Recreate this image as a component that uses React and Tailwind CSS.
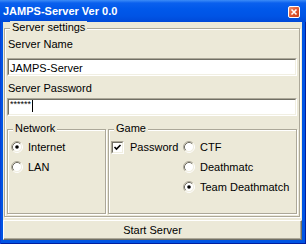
import React from "react";

function Radio({ checked }) {
  return (
    <svg width="12" height="12" viewBox="0 0 12 12" className="shrink-0 block">
      <circle cx="6" cy="6" r="4.5" fill="#fff" />
      <path d="M2.11 9.89 A5.5 5.5 0 0 1 9.89 2.11" fill="none" stroke="#aca899" strokeWidth="1" />
      <path d="M9.89 2.11 A5.5 5.5 0 0 1 2.11 9.89" fill="none" stroke="#ffffff" strokeWidth="1" />
      <path d="M2.82 9.18 A4.5 4.5 0 0 1 9.18 2.82" fill="none" stroke="#716f64" strokeWidth="1" />
      <path d="M9.18 2.82 A4.5 4.5 0 0 1 2.82 9.18" fill="none" stroke="#f1efe2" strokeWidth="1" />
      {checked && <circle cx="6" cy="6" r="1.8" fill="#000" />}
    </svg>
  );
}

function RadioRow({ checked, label }) {
  return (
    <div className="h-[20px] flex items-center">
      <Radio checked={checked} />
      <span className="ml-[5px] whitespace-nowrap">{label}</span>
    </div>
  );
}

function Checkbox({ checked }) {
  return (
    <div className="w-[13px] h-[13px] shrink-0 border border-t-[#aca899] border-l-[#aca899] border-b-white border-r-white">
      <div className="w-full h-full border border-t-[#716f64] border-l-[#716f64] border-b-[#f1efe2] border-r-[#f1efe2] bg-white">
        {checked && (
          <svg width="9" height="9" viewBox="0 0 9 9" className="block">
            <path d="M1.5 4 L3.5 6 L7.5 2" fill="none" stroke="#000" strokeWidth="1.6" />
          </svg>
        )}
      </div>
    </div>
  );
}

function Group({ label, className, legendClass, children }) {
  return (
    <div className={"relative border border-[#aca899] shadow-[inset_1px_1px_0_#fff,1px_1px_0_#fff] " + className}>
      <span className={"absolute left-[5px] px-[2px] bg-[#ece9d8] whitespace-nowrap " + legendClass}>{label}</span>
      {children}
    </div>
  );
}

function TextBox({ children }) {
  return (
    <div className="h-[18px] border border-t-[#aca899] border-l-[#aca899] border-b-white border-r-white">
      <div className="w-full h-full border border-t-[#716f64] border-l-[#716f64] border-b-[#f1efe2] border-r-[#f1efe2] bg-white pl-[1px]">
        {children}
      </div>
    </div>
  );
}

export default function App() {
  return (
    <div className="w-[306px] h-[244px] flex flex-col bg-[#0054e3] shadow-[inset_1px_0_0_#0a3fd6,inset_-1px_0_0_#001ea0,inset_0_-1px_0_#001ea0] font-['Liberation_Sans',Arial,sans-serif] text-[11px] leading-[13px] text-black overflow-hidden">
      <div className="h-[22px] shrink-0 flex items-start justify-between bg-[linear-gradient(to_bottom,#3c8cf7_0px,#0a60ee_3px,#0058ea_9px,#0054e5_16px,#0049d8_22px)]">
        <span className="pl-[3px] pt-[5px] font-bold text-white whitespace-nowrap">JAMPS-Server Ver 0.0</span>
        <div className="mt-[6px] mr-[6px] w-[12px] h-[12px] rounded-[2px] border border-white bg-[linear-gradient(to_bottom_right,#f0906c,#e0552e_55%,#c8401a)] flex items-center justify-center">
          <svg width="8" height="8" viewBox="0 0 8 8" className="block">
            <path d="M1.5 1.5 L6.5 6.5 M6.5 1.5 L1.5 6.5" stroke="#fff" strokeWidth="1.6" />
          </svg>
        </div>
      </div>
      <div className="flex-1 ml-[3px] mr-[4px] mb-[4px] bg-[#ece9d8] flex flex-col">
        <Group label="Server settings" className="mt-[6px] ml-[1px] mr-[2px] h-[189px] pt-[9px] px-[2px]" legendClass="top-[-8px]">
          <div className="pl-[1px] h-[13px]">Server Name</div>
          <div className="mt-[7px]">
            <TextBox>
              <div className="pt-[2px]">JAMPS-Server</div>
            </TextBox>
          </div>
          <div className="pl-[1px] h-[13px] mt-[6px]">Server Password</div>
          <div className="mt-[3px]">
            <TextBox>
              <div className="flex items-start">
                <span className="text-[9px] leading-[9px]">******</span>
                <span className="ml-[1px] w-[1px] h-[12px] bg-black"></span>
              </div>
            </TextBox>
          </div>
          <div className="mt-[13px] flex gap-[2px] h-[85px]">
            <Group label="Network" className="w-[99px] pt-[7px] pl-[3px]" legendClass="top-[-8px]">
              <RadioRow checked label="Internet" />
              <RadioRow label="LAN" />
            </Group>
            <Group label="Game" className="flex-1 pt-[7px] flex" legendClass="top-[-8px]">
              <div className="w-[74px] pl-[2px]">
                <div className="h-[20px] flex items-center">
                  <Checkbox checked />
                  <span className="ml-[6px]">Password</span>
                </div>
              </div>
              <div>
                <RadioRow label="CTF" />
                <RadioRow label="Deathmatc" />
                <RadioRow checked label="Team Deathmatch" />
              </div>
            </Group>
          </div>
        </Group>
        <div className="mt-[3px] h-[20px] flex items-center justify-center border border-t-white border-l-white border-b-[#716f64] border-r-[#716f64] shadow-[inset_-1px_-1px_0_#aca899]">
          Start Server
        </div>
      </div>
    </div>
  );
}
